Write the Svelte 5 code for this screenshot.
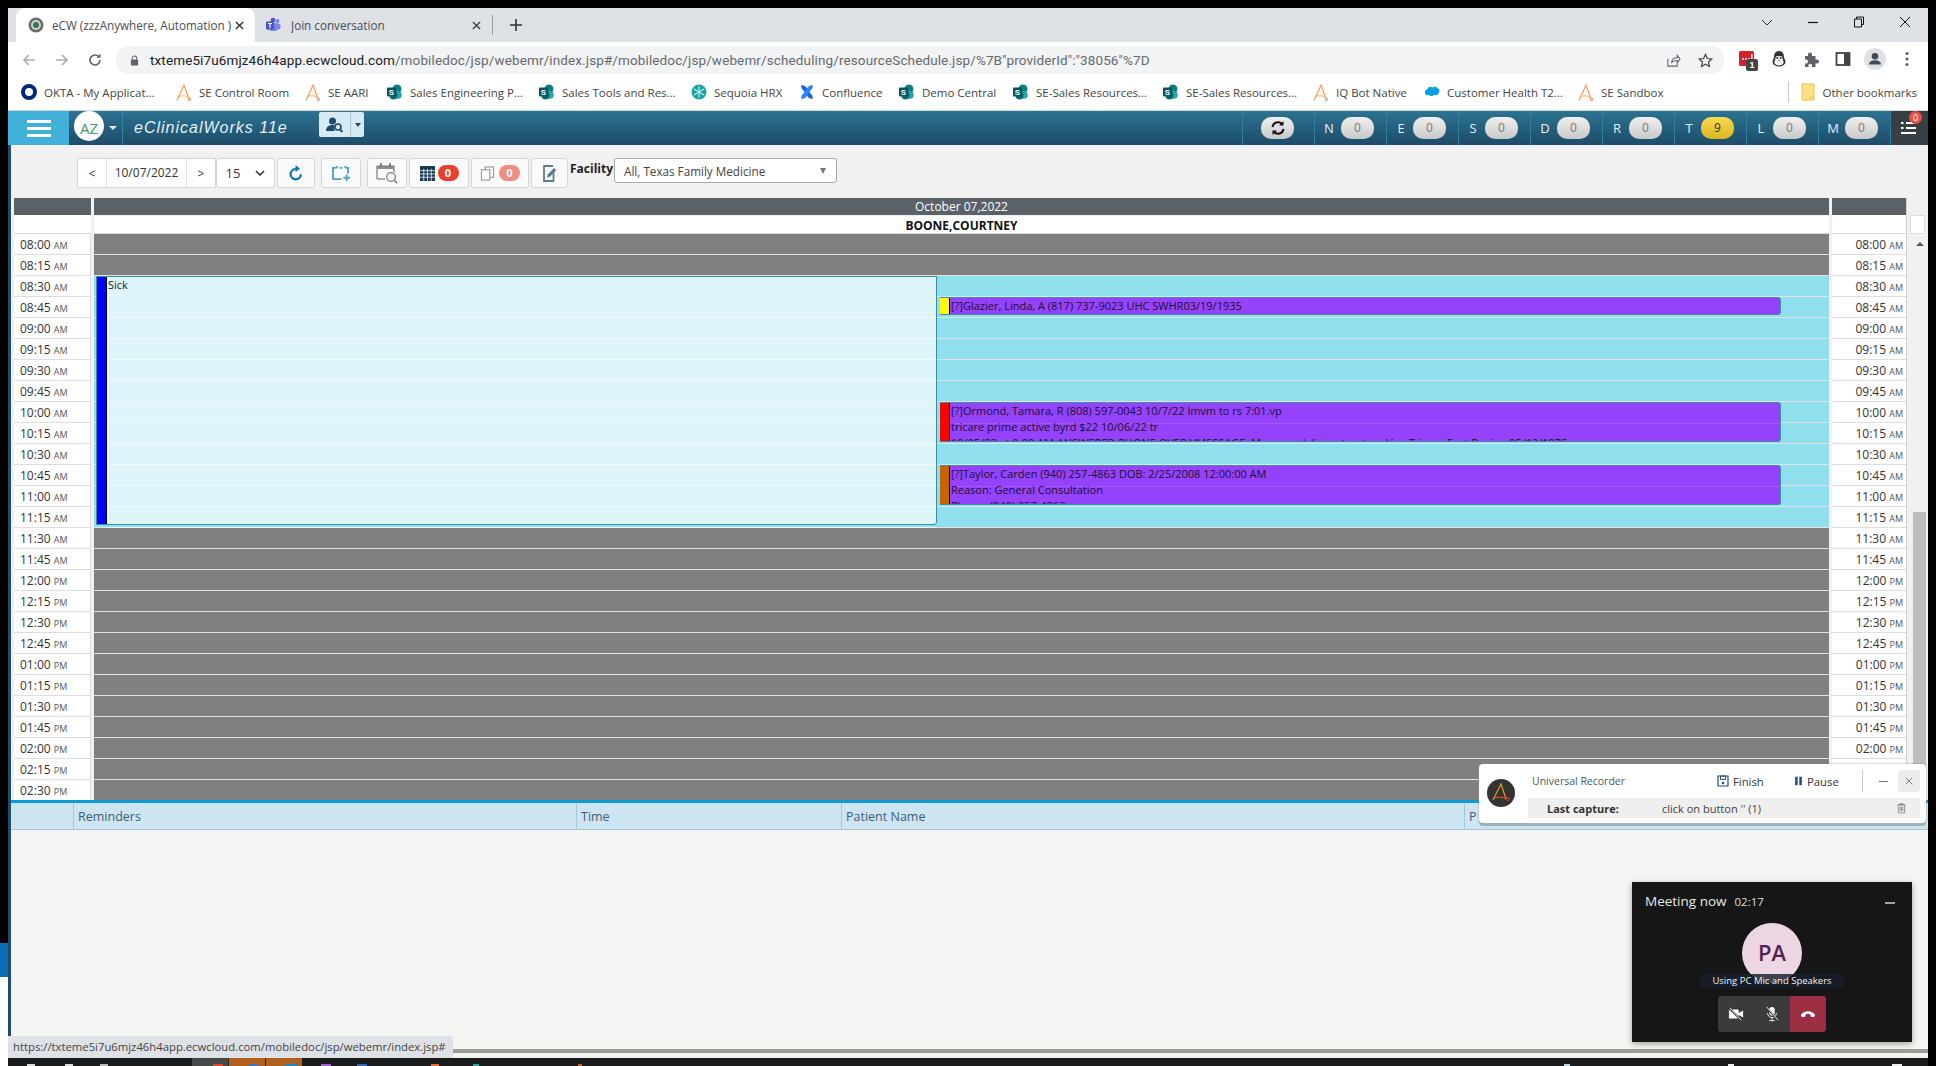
<script>
    const bookmarks = [
        { icon: "okta", label: "OKTA - My Applicat...", w: 155 },
        { icon: "aari", label: "SE Control Room", w: 129 },
        { icon: "aari", label: "SE AARI", w: 82 },
        { icon: "share", label: "Sales Engineering P...", w: 152 },
        { icon: "share", label: "Sales Tools and Res...", w: 152 },
        { icon: "seq", label: "Sequoia HRX", w: 108 },
        { icon: "conf", label: "Confluence", w: 100 },
        { icon: "share", label: "Demo Central", w: 114 },
        { icon: "share", label: "SE-Sales Resources...", w: 150 },
        { icon: "share", label: "SE-Sales Resources...", w: 150 },
        { icon: "aari", label: "IQ Bot Native", w: 111 },
        { icon: "sf", label: "Customer Health T2...", w: 154 },
        { icon: "aari", label: "SE Sandbox", w: 90 }
    ]

    const counters = [
        { k: "N", v: 0 }, { k: "E", v: 0 }, { k: "S", v: 0 }, { k: "D", v: 0 },
        { k: "R", v: 0 }, { k: "T", v: 9, warn: true }, { k: "L", v: 0 }, { k: "M", v: 0 }
    ]

    const times = []
    for (let i = 0; i < 27; i++) {
        const mins = 8 * 60 + i * 15
        const h24 = Math.floor(mins / 60)
        const h = h24 > 12 ? h24 - 12 : h24
        times.push({
            t: String(h).padStart(2, "0") + ":" + String(mins % 60).padStart(2, "0"),
            ap: h24 >= 12 ? "PM" : "AM",
            open: i >= 2 && i <= 13
        })
    }

    const appts = [
        { top: 63, h: 18, color: "#ffff00", lines: ["[?]Glazier, Linda, A (817) 737-9023 UHC SWHR03/19/1935"] },
        { top: 168, h: 40, color: "#ff0000", lines: ["[?]Ormond, Tamara, R (808) 597-0043 10/7/22 lmvm to rs 7:01.vp", "tricare prime active byrd $22 10/06/22 tr", "10/05/22 at 9:00 AM ANSWERED PHONE OVER VMESSAGE. Message delivery to pt and ins Tricare East Region 05/12/1975"] },
        { top: 231, h: 40, color: "#c86400", lines: ["[?]Taylor, Carden (940) 257-4863 DOB: 2/25/2008 12:00:00 AM", "Reason: General Consultation", "Phone: (940) 257-4863"] }
    ]

    // tops of the taskbar icons, the rest is off the bottom of the shot
    const ticks = [
        { x: 19, w: 8, c: "#ddd" }, { x: 57, w: 8, c: "#ddd" }, { x: 92, w: 8, c: "#bbb" },
        { x: 205, w: 10, c: "#d9482f" }, { x: 241, w: 8, c: "#3f6fd0" }, { x: 278, w: 12, c: "#1c86c8" },
        { x: 313, w: 10, c: "#a65fd0" }, { x: 349, w: 10, c: "#3465b0" }, { x: 423, w: 8, c: "#e0703a" },
        { x: 465, w: 6, c: "#2aa5a8" }, { x: 570, w: 4, c: "#c06030" }, { x: 1556, w: 6, c: "#bcd8ee" },
        { x: 1720, w: 6, c: "#eee" }, { x: 1884, w: 10, c: "#eee" }
    ]
</script>

{#snippet timeCol(cls)}
    <div class="timecol {cls}">
        <div class="gridhead"></div>
        <div class="gridsub"></div>
        {#each times as row}
            <div class="timecell">{row.t} <small>{row.ap}</small></div>
        {/each}
    </div>
{/snippet}

<div class="screen">
    <div class="gutter">
        <div class="gblack"></div>
        <div class="gblue"></div>
        <div class="gwhite"></div>
    </div>

    <div class="middle">
        <div class="tabstrip">
            <div class="tab active">
                <svg class="fav" viewBox="0 0 16 16"><circle cx="8" cy="8" r="7.5" fill="#6b6b6b"/><circle cx="8" cy="8" r="5" fill="#c9d6c4"/><circle cx="8" cy="8" r="3" fill="#3f6f5a"/></svg>
                <span class="tabtext">eCW (zzzAnywhere, Automation )</span>
                <svg class="tabx" viewBox="0 0 10 10"><path d="M1 1l8 8M9 1l-8 8" stroke="#333" stroke-width="1.6"/></svg>
            </div>
            <div class="tab">
                <svg class="fav" viewBox="0 0 16 16"><circle cx="12.5" cy="4" r="2" fill="#7b83eb"/><rect x="9" y="6.5" width="6.5" height="6" rx="2" fill="#7b83eb"/><circle cx="8" cy="3.2" r="2.4" fill="#5059c9"/><rect x="5" y="6" width="7" height="8" rx="1" fill="#7b83eb"/><rect x="1" y="4.5" width="8" height="8" rx="1" fill="#4b53bc"/><path d="M3 6.5h4M5 6.5v4.5" stroke="#fff" stroke-width="1.1"/></svg>
                <span class="tabtext">Join conversation</span>
                <svg class="tabx" viewBox="0 0 10 10"><path d="M1 1l8 8M9 1l-8 8" stroke="#444" stroke-width="1.6"/></svg>
            </div>
            <i class="tabsep"></i>
            <svg class="plus" viewBox="0 0 14 14"><path d="M7 1v12M1 7h12" stroke="#333" stroke-width="1.6"/></svg>
            <div class="winctl">
                <svg viewBox="0 0 12 12"><path d="M1 4l5 5 5-5" fill="none" stroke="#333"/></svg>
                <svg viewBox="0 0 12 12"><path d="M1 6.5h10" stroke="#111" stroke-width="1.2"/></svg>
                <svg viewBox="0 0 12 12"><path d="M3.5 3V1h7v7.5H8.5M1.5 3h7v8h-7z" fill="none" stroke="#111"/></svg>
                <svg viewBox="0 0 12 12"><path d="M1 1l10 10M11 1L1 11" stroke="#111"/></svg>
            </div>
        </div>

        <div class="toolbar">
            <svg class="nav" viewBox="0 0 16 16"><path d="M14 8H3M8 3L3 8l5 5" fill="none" stroke="#a9adb2" stroke-width="1.6"/></svg>
            <svg class="nav" viewBox="0 0 16 16"><path d="M2 8h11M8 3l5 5-5 5" fill="none" stroke="#a9adb2" stroke-width="1.6"/></svg>
            <svg class="nav" viewBox="0 0 16 16"><path d="M13 8a5 5 0 1 1-1.5-3.600" fill="none" stroke="#5f6368" stroke-width="1.6"/><path d="M13.5 1.5v4.2H9.3z" fill="#5f6368"/></svg>
            <div class="omni">
                <svg class="lock" viewBox="0 0 10 12"><path d="M2.5 5V3.5a2.5 2.5 0 0 1 5 0V5" fill="none" stroke="#5f6368" stroke-width="1.2"/><rect x="1" y="5" width="8" height="6.5" rx="1" fill="#5f6368"/></svg>
                <span class="url"><b>txteme5i7u6mjz46h4app.ecwcloud.com</b>/mobiledoc/jsp/webemr/index.jsp#/mobiledoc/jsp/webemr/scheduling/resourceSchedule.jsp/%7B"providerId":"38056"%7D</span>
                <svg class="omni-ic share-ic" viewBox="0 0 16 16"><path d="M2 6v8h10v-3M6 10c0-3.5 2.5-5 6-5V2.500l3 4-3 4V8c-2.500 0-4.500.5-6 2z" fill="none" stroke="#5f6368" stroke-width="1.1"/></svg>
                <svg class="omni-ic" viewBox="0 0 16 16"><path d="M8 1.5l2 4.400 4.700.5-3.500 3.200 1 4.700L8 11.900l-4.200 2.400 1-4.700L1.300 6.400 6 5.900z" fill="none" stroke="#444" stroke-width="1.3"/></svg>
            </div>
            <div class="exts">
                <span class="ext">
                    <svg viewBox="0 0 18 18"><rect x="1" y="1" width="15" height="15" rx="1.5" fill="#d8202a"/><circle cx="5" cy="9" r="1" fill="#fff"/><circle cx="8" cy="9" r="1" fill="#fff"/><circle cx="11" cy="9" r="1" fill="#fff"/><rect x="13" y="4" width="1.5" height="6" fill="#fff"/></svg>
                    <b class="extbadge">1</b>
                </span>
                <span class="ext">
                    <svg viewBox="0 0 18 18"><path d="M9 1c-3.500 0-5 3-5 6 0 1.500-1.500 3-1.500 5s2.500 4.500 6.500 4.500 6.500-2.500 6.500-4.500S14 8.500 14 7c0-3-1.500-6-5-6z" fill="#333"/><path d="M5.500 8c0-1.500 1.500-2.500 3.500-1.500C11 5.500 12.500 6.500 12.500 8c0 2 1.500 3 1 5-.5 1.500-2.500 2.500-4.500 2.500S5 14.500 4.500 13c-.5-2 1-3 1-5z" fill="#f3f3f3"/><circle cx="7.3" cy="8" r=".9" fill="#222"/><circle cx="10.7" cy="8" r=".9" fill="#222"/><path d="M8 10h2l-1 1.200z" fill="#333"/></svg>
                </span>
                <span class="ext">
                    <svg viewBox="0 0 18 18"><path d="M3 6h3V4.500a2 2 0 0 1 4 0V6h3.500v3.500H15a2 2 0 0 1 0 4h-1.500V17H10v-1.500a1.800 1.800 0 0 0-3.600 0V17H3v-3.500h1a2 2 0 0 0 0-4H3z" fill="#5f6368"/></svg>
                </span>
                <span class="ext">
                    <svg viewBox="0 0 18 18"><rect x="2.5" y="3" width="13" height="12" fill="none" stroke="#444" stroke-width="1.8"/><rect x="10" y="3" width="5.5" height="12" fill="#444"/></svg>
                </span>
                <span class="ext avatar">
                    <svg viewBox="0 0 22 22"><circle cx="11" cy="11" r="11" fill="#dfe1e5"/><circle cx="11" cy="8.3" r="3.3" fill="#414a5a"/><path d="M4.800 16.500c.6-3 3-4.200 6.200-4.200s5.600 1.200 6.200 4.200z" fill="#414a5a"/></svg>
                </span>
                <span class="ext">
                    <svg viewBox="0 0 18 18"><circle cx="9" cy="3.5" r="1.6" fill="#5f6368"/><circle cx="9" cy="9" r="1.6" fill="#5f6368"/><circle cx="9" cy="14.5" r="1.6" fill="#5f6368"/></svg>
                </span>
            </div>
        </div>

        <div class="bookmarks">
            {#each bookmarks as b}
                <div class="bm" style="width:{b.w}px">
                    {#if b.icon === "okta"}
                        <svg viewBox="0 0 16 16"><circle cx="8" cy="8" r="6" fill="none" stroke="#00297a" stroke-width="4"/></svg>
                    {:else if b.icon === "aari"}
                        <svg class="tall" viewBox="0 0 16 18"><path d="M1 17L8 1.500l5 14" fill="none" stroke="#f59a5a" stroke-width="1.2"/><path d="M2.500 13c3-1 7-1 10 .5" fill="none" stroke="#f7b733" stroke-width="1"/><circle cx="13.5" cy="16" r="1.2" fill="none" stroke="#e86a4a" stroke-width=".9"/></svg>
                    {:else if b.icon === "share"}
                        <svg viewBox="0 0 16 16"><circle cx="10" cy="5" r="4.5" fill="#0f7b83"/><circle cx="11" cy="11" r="3.8" fill="#2aa5a8"/><circle cx="6.5" cy="11.5" r="4" fill="#0b6a70"/><rect x="0" y="3.5" width="9" height="9" rx="1" fill="#05565c"/><text x="4.5" y="10.8" class="s">S</text></svg>
                    {:else if b.icon === "seq"}
                        <svg viewBox="0 0 16 16"><circle cx="8" cy="8" r="7.5" fill="#1ba3a3"/><path d="M8 2v12M3 5l10 6M13 5L3 11" stroke="#bfeeee" stroke-width="1.1"/></svg>
                    {:else if b.icon === "conf"}
                        <svg viewBox="0 0 16 16"><path d="M2.500 3.500C6 2.500 6 6 8 8s2 5.500 5.500 4.500" fill="none" stroke="#1868db" stroke-width="4"/><path d="M13.500 3.500C10 2.500 10 6 8 8s-2 5.500-5.500 4.500" fill="none" stroke="#2684ff" stroke-width="4"/></svg>
                    {:else if b.icon === "sf"}
                        <svg viewBox="0 0 18 14"><path d="M4 3.500C5 1 8 .5 9.500 2c1.500-1.500 5-1.500 6 1 2 .5 2.500 3.500 1 5-.5 2.500-3.500 3-5 2-1.500 2-4.500 2-6 .5-2 .5-4-.5-4.500-2.500-.5-2 .5-3.500 3-4.500z" fill="#00a1e0"/></svg>
                    {/if}
                    <span>{b.label}</span>
                </div>
            {/each}
            <i class="bmsep"></i>
            <div class="bm other">
                <svg viewBox="0 0 14 18"><path d="M1 1h12v16H1z" fill="#ffe082" stroke="#e8c24a"/><path d="M9 17v-3h4" fill="none" stroke="#e8c24a"/></svg>
                <span>Other bookmarks</span>
            </div>
        </div>

        <div class="appbar">
            <div class="burger"><i></i><i></i><i></i></div>
            <div class="who"><span class="az">AZ</span><i class="caret"></i></div>
            <div class="brand">eClinicalWorks 11e</div>
            <div class="lookup">
                <span class="lookup-main">
                    <svg viewBox="0 0 18 16"><circle cx="6.5" cy="4" r="3.5" fill="#1e4a66"/><path d="M0 14c0-4 3-6 6.500-6 1 0 2 .2 2.800.6a4.500 4.500 0 0 0-.3 5.400z" fill="#1e4a66"/><circle cx="12" cy="10" r="3" fill="none" stroke="#1e4a66" stroke-width="1.6"/><path d="M14 12.500l2.500 2.500" stroke="#1e4a66" stroke-width="1.8"/></svg>
                </span>
                <span class="lookup-more"><i class="caret dark"></i></span>
            </div>
            <div class="counters">
                <div class="cnt">
                    <span class="pill sync">
                        <svg viewBox="0 0 16 16"><path d="M2.500 7a5.500 5.500 0 0 1 9.500-3M13.500 9A5.500 5.500 0 0 1 4 12" fill="none" stroke="#111" stroke-width="2"/><path d="M13.500 1v4.500H9zM2.500 15v-4.500H7z" fill="#111"/></svg>
                    </span>
                </div>
                {#each counters as c}
                    <div class="cnt">
                        <span class="lbl">{c.k}</span>
                        <span class="pill" class:warn={c.warn}>{c.v}</span>
                    </div>
                {/each}
                <div class="tasks">
                    <svg viewBox="0 0 16 14"><path d="M5 2h10M5 7h10M0 12h15" stroke="#fff" stroke-width="2"/><path d="M0 2h2.500M0 7h2.500" stroke="#fff" stroke-width="2"/></svg>
                    <b class="redbadge">0</b>
                </div>
            </div>
        </div>

        <div class="app">
            <div class="content">
                <div class="tools">
                    <div class="btn datepick">
                        <span class="arrow">&lt;</span>
                        <span class="datev">10/07/2022</span>
                        <span class="arrow nx">&gt;</span>
                    </div>
                    <div class="btn sel15">
                        <span>15</span>
                        <svg viewBox="0 0 10 6"><path d="M1 1l4 4 4-4" fill="none" stroke="#333" stroke-width="1.6"/></svg>
                    </div>
                    <div class="btn w38">
                        <svg class="refresh" viewBox="0 0 18 20"><path d="M14.500 11.500a5.800 5.800 0 1 1-5.800-6" fill="none" stroke="#0f7aa8" stroke-width="2.6"/><path d="M8.500 1l5 4.300-5 3.700z" fill="#0f7aa8"/></svg>
                    </div>
                    <div class="btn w40 gap6">
                        <svg class="addic" viewBox="0 0 20 18"><path d="M1 10V3h4M8 3h3M14 3h3v6M1 10v5h9" fill="none" stroke="#4fa3c4" stroke-width="2"/><path d="M5.500 1v2M14 1v2" stroke="#4fa3c4" stroke-width="2"/><path d="M15.500 10v7M12 13.500h7" stroke="#4fa3c4" stroke-width="2"/></svg>
                    </div>
                    <div class="btn w40 gap6">
                        <svg class="calic" viewBox="0 0 22 22"><path d="M1 17V4h17v6" fill="none" stroke="#777" stroke-width="1.2"/><path d="M1 4h17v3H1z" fill="#8a8a8a"/><path d="M5 1v4M14 1v4" stroke="#666" stroke-width="1.5"/><path d="M1 17h8" stroke="#777" stroke-width="1.2"/><circle cx="15" cy="15" r="4.300" fill="#fafafa" stroke="#777" stroke-width="1.2"/><path d="M18.200 18.200l3 3" stroke="#777" stroke-width="1.5"/></svg>
                    </div>
                    <div class="btn w60">
                        <svg class="gridic" viewBox="0 0 16 16"><rect width="16" height="16" fill="#173a52"/><path d="M0 5h16M0 8.500h16M0 12h16M4 3v13M8 3v13M12 3v13" stroke="#fff" stroke-width=".8"/></svg>
                        <b class="num red">0</b>
                    </div>
                    <div class="btn w58">
                        <svg class="gridic" viewBox="0 0 16 16"><rect x="5.500" y="1" width="9" height="11" fill="#fafafa" stroke="#888"/><rect x="1.500" y="4" width="9" height="11" fill="#fafafa" stroke="#888"/></svg>
                        <b class="num salmon">0</b>
                    </div>
                    <div class="btn w37">
                        <svg class="editic" viewBox="0 0 14 17"><path d="M10.500 7v9H1V1h9" fill="none" stroke="#5b7d90" stroke-width="1.8"/><path d="M4 12.500l.8-3L11 3l2.200 2.200L7 11.700z" fill="#5b7d90"/></svg>
                    </div>
                    <span class="facility">Facility</span>
                    <div class="facsel">
                        <span>All, Texas Family Medicine</span>
                        <i class="caret small"></i>
                    </div>
                </div>

                <div class="schedule">
                    {@render timeCol("left")}
                    <div class="maincol">
                        <div class="gridhead">October 07,2022</div>
                        <div class="gridsub">BOONE,COURTNEY</div>
                        <div class="slots">
                            {#each times as row}
                                <div class="slot" class:open={row.open}></div>
                            {/each}
                            <div class="block">
                                <i class="bar"></i>
                                <span>Sick</span>
                                <div class="blocklines">
                                    {#each Array(11) as _}
                                        <i></i>
                                    {/each}
                                </div>
                            </div>
                            {#each appts as a}
                                <div class="appt" style="top:{a.top}px;height:{a.h}px">
                                    <i class="bar" style="background:{a.color}"></i>
                                    <div class="appttext">
                                        {#each a.lines as l}
                                            <div class="line">{l}</div>
                                        {/each}
                                    </div>
                                </div>
                            {/each}
                        </div>
                    </div>
                    {@render timeCol("right")}
                    <div class="vscroll">
                        <div class="corner"></div>
                        <i class="uparrow"></i>
                        <div class="thumb"></div>
                    </div>
                </div>

                <div class="reminders">
                    <div class="remhead">
                        <div class="rc c0"></div>
                        <div class="rc c1">Reminders</div>
                        <div class="rc c2">Time</div>
                        <div class="rc c3">Patient Name</div>
                        <div class="rc c4">P</div>
                    </div>
                    <div class="rembody"></div>
                </div>
            </div>
            <div class="hbar"></div>
            <div class="hbarpad"></div>

            <div class="statusbubble">https://txteme5i7u6mjz46h4app.ecwcloud.com/mobiledoc/jsp/webemr/index.jsp#</div>

            <div class="recorder">
                <svg class="reclogo" viewBox="0 0 28 28"><circle cx="14" cy="14" r="14" fill="#333"/><path d="M6 21L14 5l5 15" fill="none" stroke="#f59a2a" stroke-width="1.1"/><path d="M7 19c4-1.500 8-1 11 .5" fill="none" stroke="#e8661f" stroke-width="1"/><circle cx="20.5" cy="20" r="1.5" fill="none" stroke="#e04a2a" stroke-width="1"/></svg>
                <div class="recmain">
                    <div class="rectop">
                        <span class="rectitle">Universal Recorder</span>
                        <span class="recact finish">
                            <svg viewBox="0 0 12 12"><path d="M1 1h10v10H1z" fill="none" stroke="#1f4e79" stroke-width="1.2"/><path d="M3.500 1h5v3.500h-5z" fill="none" stroke="#1f4e79"/><circle cx="6" cy="8" r="1.3" fill="#1f4e79"/></svg>
                            Finish
                        </span>
                        <span class="recact pause">
                            <svg viewBox="0 0 10 12"><path d="M1 1h3v10H1zM6 1h3v10H6z" fill="#1f4e79"/></svg>
                            Pause
                        </span>
                        <i class="recsep"></i>
                        <svg class="recmin" viewBox="0 0 10 10"><path d="M0 5h10" stroke="#666"/></svg>
                        <span class="recclose"><svg viewBox="0 0 10 10"><path d="M1 1l8 8M9 1l-8 8" stroke="#666"/></svg></span>
                    </div>
                    <div class="recbottom">
                        <b>Last capture:</b>
                        <span class="cap">click on button '' (1)</span>
                        <svg class="trash" viewBox="0 0 10 12"><path d="M.5 2.500h9M3.500 2.500V1h3v1.500M1.500 2.500h7v9h-7zM3.500 4.500v5M5 4.500v5M6.500 4.500v5" fill="none" stroke="#777" stroke-width=".8"/></svg>
                    </div>
                </div>
            </div>

            <div class="meeting">
                <div class="meethead">
                    <span class="meettitle">Meeting now</span>
                    <span class="meettime">02:17</span>
                    <svg class="meetmin" viewBox="0 0 10 2"><path d="M0 1h10" stroke="#fff" stroke-width="1.2"/></svg>
                </div>
                <div class="pa">PA</div>
                <div class="usingpc">Using PC Mic and Speakers</div>
                <div class="meetbtns">
                    <span class="mb">
                        <svg viewBox="0 0 18 16"><path d="M1 3h11v10H1zM12 7l5-3v8l-5-3z" fill="#fff"/><path d="M1 1l14 14" stroke="#3b3b3b" stroke-width="2.4"/><path d="M2 1l13 14" stroke="#fff" stroke-width="1"/></svg>
                    </span>
                    <span class="mb">
                        <svg viewBox="0 0 16 18"><rect x="5" y="1" width="6" height="10" rx="3" fill="#fff"/><path d="M3 8a5 5 0 0 0 10 0M8 13v3M5 16.500h6" fill="none" stroke="#fff"/><path d="M1 1l14 15" stroke="#3b3b3b" stroke-width="2.4"/><path d="M2 1l13 15" stroke="#fff"/></svg>
                    </span>
                    <span class="mb hang">
                        <svg viewBox="0 0 18 8"><path d="M1 5.500C4-.5 14-.5 17 5.500l-1 2h-3.500l-1-3c-1.500-.6-3.500-.6-5 0l-1 3H2z" fill="#fff"/></svg>
                    </span>
                </div>
            </div>
        </div>
        <div class="taskbar">
            <i class="tk gray"></i>
            <i class="tk orange"></i>
            <i class="tk orange"></i>
            {#each ticks as t}
                <i class="tick" style="left:{t.x}px;width:{t.w}px;background:{t.c}"></i>
            {/each}
        </div>
    </div>

    <div class="gutter right"></div>
</div>

<style>
    :global(body) {
        margin: 0;
        background: #000;
    }

    .screen {
        width: 1936px;
        height: 1066px;
        display: flex;
        overflow: hidden;
        background: #000;
        font-family: "Open Sans", "Liberation Sans", sans-serif;
        color: #222;
    }

    .gutter {
        width: 8px;
        flex: none;
        display: flex;
        flex-direction: column;
    }
    .gblack { height: 943px; background: #000; }
    .gblue { height: 34px; background: #0b6cb8; }
    .gwhite { flex: 1; background: #fff; }
    .gutter.right { background: #000; }

    .middle {
        width: 1920px;
        flex: none;
        padding-top: 8px;
        display: flex;
        flex-direction: column;
        box-sizing: border-box;
    }

    /* browser chrome */
    .tabstrip {
        height: 34px;
        background: #dee1e6;
        display: flex;
        align-items: flex-end;
        padding-left: 8px;
        flex: none;
    }
    .tab {
        height: 34px;
        display: flex;
        align-items: center;
        box-sizing: border-box;
        padding-left: 12px;
        font-size: 11.7px;
        color: #4a4d52;
        width: 239px;
    }
    .tab.active {
        background: #fff;
        border-radius: 9px 9px 0 0;
    }
    .fav { width: 16px; height: 16px; flex: none; margin-right: 8px; }
    .tab + .tab { width: 237px; padding-left: 10px; }
    .tab + .tab .fav { margin-right: 10px; }
    .tabtext { flex: 1; white-space: nowrap; overflow: hidden; }
    .tabx { width: 9px; height: 9px; margin-right: 11px; flex: none; }
    .tabsep { width: 1px; height: 20px; background: #9a9da1; margin: 0 0 7px 0; }
    .plus { width: 14px; height: 14px; margin: 0 0 10px 16px; }
    .winctl {
        margin-left: auto;
        display: flex;
        align-self: center;
        padding-right: 17px;
        gap: 34px;
        margin-top: -6px;
    }
    .winctl svg { width: 12px; height: 12px; display: block; }

    .toolbar {
        height: 32px;
        background: #fff;
        display: flex;
        align-items: flex-end;
        padding-left: 13px;
        flex: none;
        box-sizing: border-box;
    }
    .nav { width: 16px; height: 16px; margin: 0 17px 6px 0; flex: none; }
    .nav:nth-child(3) { margin-right: 13px; }
    .omni {
        width: 1608px;
        height: 28px;
        background: #f1f3f4;
        border-radius: 14px;
        display: flex;
        align-items: center;
        box-sizing: border-box;
        padding-left: 14px;
        flex: none;
    }
    .lock { width: 9px; height: 11px; flex: none; margin-right: 11px; }
    .url {
        font-family: Roboto, "Open Sans", sans-serif;
        font-size: 13.5px;
        color: #666a6e;
        white-space: nowrap;
        letter-spacing: .12px;
    }
    .url b { color: #202124; font-weight: 400; }
    .omni-ic { width: 15px; height: 15px; margin-right: 11px; flex: none; }
    .share-ic { margin-left: auto; margin-right: 17px; }
    .exts {
        display: flex;
        padding-left: 7px;
        gap: 0;
        margin-bottom: 5px;
    }
    .ext {
        width: 32px;
        height: 20px;
        display: flex;
        align-items: center;
        justify-content: center;
        position: relative;
    }
    .ext svg { width: 18px; height: 18px; }
    .ext.avatar svg { width: 22px; height: 22px; }
    .extbadge {
        position: absolute;
        left: 15px;
        top: 10px;
        width: 12px;
        height: 12px;
        background: #444;
        color: #fff;
        font-size: 9px;
        line-height: 12px;
        text-align: center;
        border-radius: 2px;
        font-family: "Liberation Sans", sans-serif;
    }

    .bookmarks {
        height: 37px;
        background: #fff;
        border-bottom: 1px solid #d5d7da;
        box-sizing: border-box;
        display: flex;
        align-items: center;
        padding: 0 11px 0 13px;
        flex: none;
        font-size: 11.5px;
        color: #444;
    }
    .bm { display: flex; align-items: center; gap: 7px; white-space: nowrap; flex: none; }
    .bm svg { width: 16px; height: 16px; flex: none; }
    .bm svg.tall { height: 19px; }
    .s { font-size: 8px; font-weight: 700; fill: #fff; text-anchor: middle; font-family: "Liberation Sans", sans-serif; }
    .bmsep { width: 1px; height: 20px; background: #c8cacc; margin: 0 12px 0 auto; }
    .other { gap: 8px; }
    .other svg { width: 14px; height: 18px; }

    /* app header */
    .appbar {
        height: 34px;
        flex: none;
        background: linear-gradient(#2c7392, #1d4c69);
        display: flex;
        align-items: stretch;
        color: #fff;
    }
    .burger {
        width: 61px;
        background: #41b1da;
        display: flex;
        flex-direction: column;
        justify-content: center;
        align-items: center;
        gap: 4px;
    }
    .burger i { width: 24px; height: 3px; background: #fff; display: block; }
    .who {
        width: 54px;
        border-right: 1px solid #2f83a8;
        display: flex;
        align-items: center;
        padding-left: 5px;
        box-sizing: border-box;
        gap: 5px;
    }
    .az {
        width: 30px;
        height: 30px;
        margin-top: -4px;
        border-radius: 50%;
        background: #fff;
        color: #3a9c6a;
        font-size: 15px;
        line-height: 34px;
        text-align: center;
        flex: none;
    }
    .caret {
        width: 0;
        height: 0;
        border-left: 4px solid transparent;
        border-right: 4px solid transparent;
        border-top: 4px solid #dfe8ee;
        display: block;
    }
    .caret.dark { border-top-color: #1e4a66; border-left-width: 3px; border-right-width: 3px; }
    .caret.small { border-top-color: #777; border-left-width: 3px; border-right-width: 3px; border-top-width: 6px; }
    .brand {
        font-family: "Liberation Sans", sans-serif;
        font-style: italic;
        font-size: 16px;
        letter-spacing: 1px;
        line-height: 34px;
        width: 196px;
        padding-left: 11px;
        box-sizing: border-box;
        color: #e6eff4;
    }
    .lookup {
        display: flex;
        height: 25px;
        margin-top: 1px;
        background: #d7ebf5;
        border-radius: 2px;
    }
    .lookup-main {
        width: 31px;
        display: flex;
        align-items: center;
        justify-content: center;
        border-right: 1px solid #a9c8d8;
    }
    .lookup-main svg { width: 18px; height: 16px; }
    .lookup-more { width: 13px; display: flex; align-items: center; justify-content: center; }

    .counters {
        margin-left: auto;
        display: flex;
        align-items: stretch;
    }
    .cnt {
        width: 72px;
        box-sizing: border-box;
        border-left: 1px solid #2f7fa5;
        display: flex;
        align-items: center;
        padding-left: 8px;
        gap: 6px;
    }
    .cnt:first-child { padding-left: 18px; }
    .lbl { font-size: 13px; width: 12px; text-align: center; color: #e6eff4; }
    .pill {
        width: 33px;
        height: 22px;
        border-radius: 10px;
        background: linear-gradient(#f0f0f0, #c9c9c9);
        color: #777;
        font-size: 12px;
        line-height: 22px;
        text-align: center;
        display: flex;
        align-items: center;
        justify-content: center;
    }
    .pill.warn { background: linear-gradient(#f7dc4e, #dcb522); color: #333; }
    .pill.sync svg { width: 16px; height: 16px; }
    .tasks {
        width: 38px;
        background: #383f44;
        border-left: 1px solid #2f7fa5;
        box-sizing: border-box;
        position: relative;
        display: flex;
        align-items: center;
        padding-left: 10px;
    }
    .tasks svg { width: 16px; height: 14px; }
    .redbadge {
        position: absolute;
        left: 18px;
        top: 0;
        width: 13px;
        height: 13px;
        border-radius: 50%;
        background: #e8503f;
        color: #fff;
        font-size: 9px;
        line-height: 13px;
        font-weight: 400;
        text-align: center;
    }

    /* page */
    .app {
        position: relative;
        flex: 1;
        min-height: 0;
        display: flex;
        flex-direction: column;
        background: #f1f1f1;
    }
    .content {
        flex: 1;
        min-height: 0;
        display: flex;
        flex-direction: column;
        border-left: 3px solid #1f4e6b;
    }

    .tools {
        height: 53px;
        flex: none;
        display: flex;
        align-items: flex-start;
        padding: 13px 0 0 66px;
        box-sizing: border-box;
        font-size: 12px;
    }
    .btn {
        height: 30px;
        background: #fafafa;
        border: 1px solid #d6d6d6;
        border-radius: 3px;
        box-sizing: border-box;
        display: flex;
        align-items: center;
        justify-content: center;
        flex: none;
        margin-right: 2px;
        color: #333;
    }
    .datepick { width: 139px; justify-content: flex-start; border-radius: 0; margin-right: 0; background: #fff; }
    .arrow { width: 28px; text-align: center; font-size: 12px; }
    .datev {
        width: 81px;
        box-sizing: border-box;
        line-height: 28px;
        text-align: center;
        border-left: 1px solid #e2e2e2;
        border-right: 1px solid #e2e2e2;
    }
    .sel15 { width: 59px; gap: 15px; font-size: 13px; background: #fff; }
    .sel15 svg { width: 10px; height: 6px; }
    .w38 { width: 38px; }
    .w37 { width: 37px; }
    .w40 { width: 40px; }
    .w60 { width: 60px; gap: 3px; }
    .w58 { width: 58px; gap: 4px; }
    .gap6 { margin-left: 4px; }
    .refresh { width: 16px; height: 18px; }
    .addic { width: 19px; height: 17px; }
    .calic { width: 22px; height: 22px; }
    .gridic { width: 15px; height: 15px; }
    .editic { width: 14px; height: 17px; }
    .num {
        width: 21px;
        height: 16px;
        border-radius: 8px;
        color: #fff;
        font-size: 11px;
        line-height: 16px;
        text-align: center;
    }
    .red { background: #e8402f; }
    .salmon { background: #ef8d7f; }
    .facility { font-weight: 700; font-size: 12px; color: #222; margin: 2px 1px 0 0; white-space: nowrap; }
    .facsel {
        width: 223px;
        height: 25px;
        background: #fff;
        border: 1px solid #aaa;
        border-radius: 3px;
        box-sizing: border-box;
        display: flex;
        align-items: center;
        justify-content: space-between;
        padding: 0 10px 0 9px;
        font-size: 11.7px;
        color: #444;
    }

    /* schedule grid */
    .schedule {
        height: 602px;
        flex: none;
        display: flex;
        overflow: hidden;
        padding-left: 3px;
    }
    .timecol {
        width: 77px;
        flex: none;
        background: #fff;
    }
    .timecol.right { width: 74px; }
    .maincol {
        width: 1735px;
        flex: none;
        margin: 0 3px;
    }
    .gridhead {
        height: 17px;
        background: #5a6268;
        color: #fff;
        font-size: 12px;
        line-height: 17px;
        text-align: center;
        margin-bottom: 1px;
    }
    .gridsub {
        height: 17px;
        background: #fff;
        font-size: 12px;
        font-weight: 700;
        line-height: 19px;
        text-align: center;
        color: #111;
        border-bottom: 1px solid #ddd;
    }
    .timecell {
        height: 20px;
        border-bottom: 1px solid #dedede;
        border-right: 1px solid #dedede;
        line-height: 22px;
        font-size: 12px;
        padding-left: 6px;
        color: #333;
        white-space: nowrap;
        overflow: hidden;
    }
    .timecell small { font-size: 9px; color: #555; }
    .timecol.right .timecell {
        text-align: right;
        padding: 0 3px 0 0;
        border-right: none;
    }
    .slots { position: relative; }
    .slot {
        height: 20px;
        background: #808080;
        border-bottom: 1px solid #e3e3e3;
    }
    .slot.open { background: #8fdfec; }

    .block {
        position: absolute;
        left: 2px;
        top: 42px;
        width: 841px;
        height: 249px;
        box-sizing: border-box;
        background: #def5fa;
        border: 1px solid #3a8cad;
        border-radius: 0 0 3px 0;
        padding-left: 11px;
        font-size: 11px;
        line-height: 16px;
        color: #222;
    }
    .block .bar {
        position: absolute;
        left: 0;
        top: 0;
        bottom: 0;
        width: 9px;
        background: #0000ff;
        border-right: 1px solid #000;
    }
    .blocklines {
        position: absolute;
        left: 11px;
        right: 0;
        top: 20px;
    }
    .blocklines i { display: block; height: 20px; border-bottom: 1px solid #eef9fb; }

    .appt {
        position: absolute;
        left: 846px;
        width: 841px;
        background: repeating-linear-gradient(#9442fb 0 20px, #a655fa 20px 21px);
        border: 1px solid #3d8ea8;
        border-left: none;
        border-radius: 0 3px 3px 0;
        box-sizing: border-box;
        overflow: hidden;
        display: flex;
        font-size: 11px;
        color: #1c1030;
    }
    .appt .bar {
        width: 9px;
        flex: none;
        border-right: 1px solid #000;
    }
    .appttext { padding-left: 1px; }
    .line {
        height: 16px;
        line-height: 16px;
        white-space: nowrap;
    }

    .vscroll {
        flex: 1;
        border-left: 1px solid #cfcfcf;
        position: relative;
    }
    .corner {
        height: 17px;
        margin: 17px 3px 0 3px;
        border: 1px solid #ddd;
        background: #fff;
    }
    .uparrow {
        display: block;
        width: 0;
        margin: 8px 0 0 9px;
        border-left: 4px solid transparent;
        border-right: 4px solid transparent;
        border-bottom: 4px solid #555;
    }
    .thumb {
        position: absolute;
        left: 6px;
        right: 2px;
        top: 314px;
        bottom: 0;
        background: #bdbdbd;
    }

    .reminders {
        flex: 1;
        min-height: 0;
        display: flex;
        flex-direction: column;
        border-top: 3px solid #0b9bd6;
        background: #f4f4f2;
    }
    .remhead {
        height: 27px;
        flex: none;
        box-sizing: border-box;
        background: #cde4f1;
        border-bottom: 1px solid #a9c4d4;
        display: flex;
        font-size: 12.5px;
        color: #3f5d78;
    }
    .rc {
        box-sizing: border-box;
        line-height: 28px;
        padding-left: 4px;
        border-right: 1px solid #a9c4d4;
    }
    .c0 { width: 63px; }
    .c1 { width: 503px; }
    .c2 { width: 265px; }
    .c3 { width: 623px; }
    .c4 { flex: 1; border-right: none; }
    .rembody { flex: 1; }

    .hbar { height: 4px; background: #9b9b97; flex: none; }
    .hbarpad { height: 5px; background: #f4f4f2; flex: none; }

    /* overlays */
    .statusbubble {
        position: absolute;
        left: 0;
        bottom: 0;
        width: 445px;
        height: 22px;
        box-sizing: border-box;
        padding-left: 5px;
        background: #dee1e6;
        border-radius: 0 4px 0 0;
        font-size: 11.3px;
        line-height: 22px;
        color: #444;
        white-space: nowrap;
    }

    .recorder {
        position: absolute;
        left: 1471px;
        top: 619px;
        width: 447px;
        height: 59px;
        box-sizing: border-box;
        background: #fff;
        border-radius: 4px;
        box-shadow: 0 3px 0 #9db1bd, 0 0 2px #888;
        display: flex;
        padding: 6px 6px 0 8px;
    }
    .reclogo { width: 28px; height: 28px; flex: none; margin-top: 9px; }
    .recmain { margin-left: 13px; flex: 1; }
    .rectop {
        height: 22px;
        display: flex;
        align-items: center;
        font-size: 10.5px;
        color: #47596a;
        padding-left: 4px;
        margin-bottom: 6px;
    }
    .rectitle { width: 185px; flex: none; }
    .recact { display: flex; align-items: center; gap: 4px; font-size: 11.3px; color: #333; }
    .recact svg { width: 12px; height: 12px; }
    .finish { width: 77px; }
    .pause svg { width: 9px; height: 10px; }
    .pause { width: 68px; }
    .recsep { width: 1px; height: 22px; background: #c8c8c8; }
    .recmin { width: 9px; height: 9px; margin-left: 16px; }
    .recclose {
        width: 22px;
        height: 22px;
        background: #ececec;
        border-radius: 3px;
        margin-left: 10px;
        display: flex;
        align-items: center;
        justify-content: center;
    }
    .recclose svg { width: 8px; height: 8px; }
    .recbottom {
        height: 20px;
        background: #efefef;
        display: flex;
        align-items: center;
        font-size: 11px;
        color: #444;
        padding-left: 19px;
    }
    .recbottom b { width: 115px; flex: none; color: #333; }
    .cap { flex: 1; }
    .trash { width: 9px; height: 12px; margin-right: 14px; }

    .meeting {
        position: absolute;
        left: 1624px;
        top: 737px;
        width: 280px;
        height: 160px;
        background: #161616;
        box-shadow: 0 2px 6px rgba(0, 0, 0, .35);
        color: #fff;
        display: flex;
        flex-direction: column;
        align-items: center;
    }
    .meethead {
        align-self: stretch;
        height: 38px;
        display: flex;
        align-items: center;
        padding: 0 17px 0 13px;
        box-sizing: border-box;
    }
    .meettitle { font-size: 13.5px; color: #e8e8e8; }
    .meettime { font-size: 11.5px; margin-left: 8px; color: #ddd; }
    .meetmin { width: 10px; height: 2px; margin-left: auto; margin-top: 4px; }
    .pa {
        width: 60px;
        height: 60px;
        margin-top: 3px;
        border-radius: 50%;
        background: #ecd6e4;
        color: #5a1f52;
        font-size: 22px;
        font-weight: 600;
        line-height: 58px;
        text-align: center;
        flex: none;
    }
    .usingpc {
        margin-top: -9px;
        width: 144px;
        height: 14px;
        border-radius: 3px;
        background: rgba(22, 30, 44, .82);
        font-size: 9.5px;
        line-height: 14px;
        text-align: center;
        white-space: nowrap;
        position: relative;
        color: #f0f0f0;
    }
    .meetbtns {
        margin-top: 8px;
        display: flex;
        border-radius: 3px;
        overflow: hidden;
    }
    .mb {
        width: 36px;
        height: 36px;
        background: #3b3b3b;
        display: flex;
        align-items: center;
        justify-content: center;
    }
    .mb svg { width: 16px; height: 16px; }
    .hang { background: #9c2e44; }

    .taskbar {
        height: 8px;
        flex: none;
        background: #1c1c1c;
        display: flex;
        padding-left: 184px;
        position: relative;
    }
    .tk { width: 36px; display: block; }
    .tk.gray { background: #484848; }
    .tk.orange { background: #b0601e; border-left: 1px solid #2a2a2a; }
    .tick { position: absolute; bottom: 0; height: 2px; display: block; }
</style>
